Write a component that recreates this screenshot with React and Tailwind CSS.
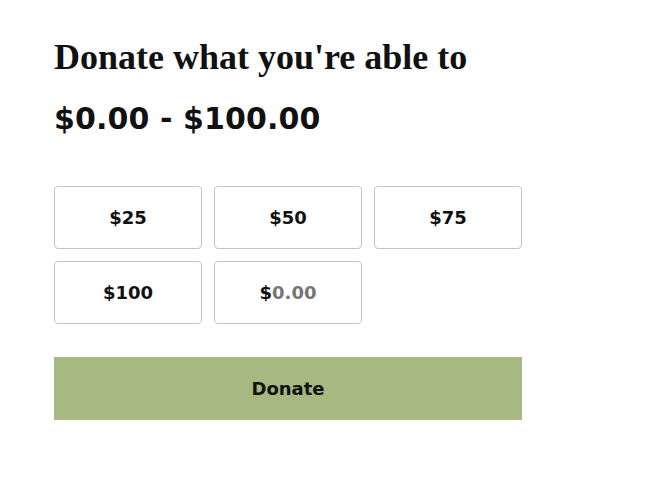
import React from 'react';

const amounts = ['$25', '$50', '$75', '$100'];

const App = () => {
  return (
    <div className="min-h-[494px] bg-white px-[54px] pt-[37px] font-['DejaVu_Sans',sans-serif] text-[#111]">
      <h1 className="font-['Liberation_Serif',serif] text-[36px] font-bold leading-[40px] text-[#111]">
        Donate what you're able to
      </h1>
      <p className="mt-[22px] text-[30px] font-bold leading-[40px] tracking-[0.1px]">$0.00 - $100.00</p>

      <div className="mt-[47px] grid w-[468px] grid-cols-3 gap-3">
        {amounts.map((a) => (
          <button
            key={a}
            className="flex h-[63px] items-center justify-center rounded-[4px] border border-[#c4c4c4] bg-white text-[18px] font-bold"
          >
            {a}
          </button>
        ))}
        {/* custom amount */}
        <div className="flex h-[63px] items-center justify-center rounded-[4px] border border-[#c4c4c4] text-[18px] font-bold">
          <span>$</span>
          <span className="text-[#757575]">0.00</span>
        </div>
      </div>

      <button className="mt-[33px] flex h-[63px] w-[468px] items-center justify-center bg-[#a5b981] text-[18px] font-bold">
        Donate
      </button>
    </div>
  );
};

export default App;
